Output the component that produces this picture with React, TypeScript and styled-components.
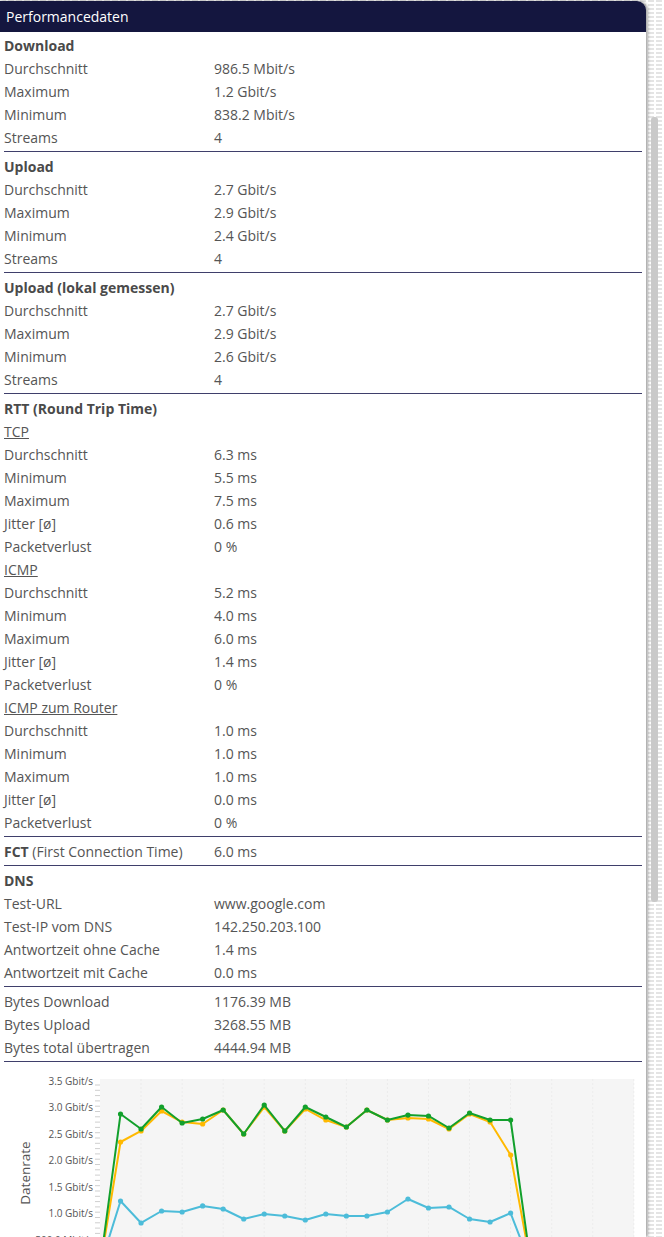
import React from 'react'
import styled, { createGlobalStyle } from 'styled-components'

const GlobalStyle = createGlobalStyle`
  html, body {
    margin: 0;
    padding: 0;
    overflow: hidden;
    background: #fff;
  }
  body {
    font-family: 'Open Sans', 'Noto Sans', sans-serif;
  }
`

const Page = styled.div`
  display: flex;
  height: 1237px;
  background-color: #fff;
  background-image:
    repeating-linear-gradient(to right, transparent 0 6px, #fff 6px 8px),
    repeating-linear-gradient(to bottom, #e4e4e4 0 2px, #fff 2px 4px);
`

const Panel = styled.div`
  width: 646px;
  flex-shrink: 0;
  margin-top: 1px;
  background: #fff;
  border-top-right-radius: 9px;
  box-shadow: 2px 0 3px rgba(0, 0, 0, 0.35);
  display: flex;
  flex-direction: column;
`

const Header = styled.div`
  height: 31px;
  background: #14163f;
  color: #fff;
  font-size: 14px;
  line-height: 31px;
  padding-left: 6px;
  border-top-right-radius: 9px;
`

const Body = styled.div`
  padding: 2px 4px 0 4px;
`

const Table = styled.table`
  width: 100%;
  border-collapse: collapse;
  border-spacing: 0;
  font-size: 14px;
  color: #555;
  white-space: nowrap;

  td {
    padding: 0;
    height: 23px;
    line-height: 23px;
    vertical-align: middle;
  }
  td:first-child {
    width: 210px;
  }
`

const TitleCell = styled.td`
  font-weight: 700;
  color: #4a4a4a;
`

const SubTitleCell = styled.td`
  text-decoration: underline;
`

const Strong = styled.b`
  font-weight: 700;
  color: #4a4a4a;
`

const Divider = styled.hr`
  border: none;
  height: 1px;
  background: #3f3f6b;
  margin: 2px 0 3px 0;
`

const Strip = styled.div`
  flex: 1;
  display: flex;
  flex-direction: column;
  padding-left: 5px;
`

const Thumb = styled.div`
  margin-top: 117px;
  width: 7px;
  height: 785px;
  background: #c9c9c9;
  border-radius: 3px;
`

const ChartBox = styled.div`
  height: 200px;
  margin-left: -4px;
  overflow: hidden;
`

type Pair = [string, string]
type Item = { title?: string; sub?: string; rows?: Pair[] }

const Block: React.FC<{ items: Item[] }> = ({ items }) => (
  <Table>
    <tbody>
      {items.map((it, i) => (
        <React.Fragment key={i}>
          {it.title && (
            <tr>
              <TitleCell colSpan={2}>{it.title}</TitleCell>
            </tr>
          )}
          {it.sub && (
            <tr>
              <SubTitleCell colSpan={2}>{it.sub}</SubTitleCell>
            </tr>
          )}
          {it.rows?.map(([k, v]) => (
            <tr key={k}>
              <td>{k}</td>
              <td>{v}</td>
            </tr>
          ))}
        </React.Fragment>
      ))}
    </tbody>
  </Table>
)

const green = [2.877, 2.594, 3.009, 2.708, 2.783, 2.953, 2.5, 3.047, 2.557, 3.009, 2.821, 2.632, 2.953, 2.764, 2.858, 2.84, 2.613, 2.896, 2.764, 2.764]
const yellow = [2.349, 2.557, 2.934, 2.726, 2.689, 2.953, 2.5, 3.009, 2.557, 2.972, 2.764, 2.632, 2.953, 2.764, 2.802, 2.783, 2.594, 2.877, 2.726, 2.104]
const blue = [1.236, 0.821, 1.047, 1.028, 1.142, 1.085, 0.896, 0.991, 0.953, 0.877, 0.991, 0.953, 0.953, 1.028, 1.274, 1.104, 1.123, 0.896, 0.84, 1.009]

const X0 = 100
const STEP = 20.53
const yOf = (v: number) => 16 + (3.5 - v) * 53

const Series: React.FC<{ data: number[]; color: string }> = ({ data, color }) => {
  const pts = [0, ...data, 0].map((v, i) => [X0 + i * STEP, yOf(v)] as const)
  return (
    <g>
      <polyline points={pts.map(p => p.join(',')).join(' ')} fill="none" stroke={color} strokeWidth={2} strokeLinejoin="round" />
      {pts.slice(1, -1).map(([x, y], i) => (
        <circle key={i} cx={x} cy={y} r={2.6} fill={color} />
      ))}
    </g>
  )
}

const Chart: React.FC = () => {
  const labels = ['3.5 Gbit/s', '3.0 Gbit/s', '2.5 Gbit/s', '2.0 Gbit/s', '1.5 Gbit/s', '1.0 Gbit/s', '500.0 Mbit/s']
  const ticks = Array.from({ length: 36 }, (_, i) => 16 + i * 5.3)
  const grid = Array.from({ length: 13 }, (_, i) => X0 + (i * 2 + 2) * STEP)
  return (
    <ChartBox>
      <svg width="646" height="200" fontFamily="'Open Sans', sans-serif">
        <rect x={X0} y={14} width={534} height={200} fill="#f5f5f5" />
        {grid.map(x => (
          <line key={x} x1={x} x2={x} y1={14} y2={200} stroke="#ececec" strokeWidth={1} strokeDasharray="2 2" />
        ))}
        {ticks.map((y, i) => (
          <line key={i} x1={95} x2={100} y1={y + 4} y2={y + 4} stroke="#cfcfcf" strokeWidth={1} />
        ))}
        {labels.map((l, i) => (
          <text key={l} x={93} y={16 + i * 26.5 + 3.5} textAnchor="end" fontSize={10} fill="#555">{l}</text>
        ))}
        <text x={0} y={0} transform="translate(30 108) rotate(-90)" textAnchor="middle" fontSize={13.5} fill="#555">Datenrate</text>
        <Series data={blue} color="#4cbcd9" />
        <Series data={yellow} color="#ffb900" />
        <Series data={green} color="#12a02c" />
      </svg>
    </ChartBox>
  )
}

const App: React.FC = () => (
  <Page>
    <GlobalStyle />
    <Panel>
      <Header>Performancedaten</Header>
      <Body>
        <Block items={[{ title: 'Download', rows: [['Durchschnitt', '986.5 Mbit/s'], ['Maximum', '1.2 Gbit/s'], ['Minimum', '838.2 Mbit/s'], ['Streams', '4']] }]} />
        <Divider />
        <Block items={[{ title: 'Upload', rows: [['Durchschnitt', '2.7 Gbit/s'], ['Maximum', '2.9 Gbit/s'], ['Minimum', '2.4 Gbit/s'], ['Streams', '4']] }]} />
        <Divider />
        <Block items={[{ title: 'Upload (lokal gemessen)', rows: [['Durchschnitt', '2.7 Gbit/s'], ['Maximum', '2.9 Gbit/s'], ['Minimum', '2.6 Gbit/s'], ['Streams', '4']] }]} />
        <Divider />
        <Block
          items={[
            { title: 'RTT (Round Trip Time)' },
            { sub: 'TCP', rows: [['Durchschnitt', '6.3 ms'], ['Minimum', '5.5 ms'], ['Maximum', '7.5 ms'], ['Jitter [ø]', '0.6 ms'], ['Packetverlust', '0 %']] },
            { sub: 'ICMP', rows: [['Durchschnitt', '5.2 ms'], ['Minimum', '4.0 ms'], ['Maximum', '6.0 ms'], ['Jitter [ø]', '1.4 ms'], ['Packetverlust', '0 %']] },
            { sub: 'ICMP zum Router', rows: [['Durchschnitt', '1.0 ms'], ['Minimum', '1.0 ms'], ['Maximum', '1.0 ms'], ['Jitter [ø]', '0.0 ms'], ['Packetverlust', '0 %']] },
          ]}
        />
        <Divider />
        <Table>
          <tbody>
            <tr>
              <td><Strong>FCT</Strong> (First Connection Time)</td>
              <td>6.0 ms</td>
            </tr>
          </tbody>
        </Table>
        <Divider />
        <Block items={[{ title: 'DNS', rows: [['Test-URL', 'www.google.com'], ['Test-IP vom DNS', '142.250.203.100'], ['Antwortzeit ohne Cache', '1.4 ms'], ['Antwortzeit mit Cache', '0.0 ms']] }]} />
        <Divider />
        <Block items={[{ rows: [['Bytes Download', '1176.39 MB'], ['Bytes Upload', '3268.55 MB'], ['Bytes total übertragen', '4444.94 MB']] }]} />
        <Divider />
        <Chart />
      </Body>
    </Panel>
    <Strip>
      <Thumb />
    </Strip>
  </Page>
)

export default App
